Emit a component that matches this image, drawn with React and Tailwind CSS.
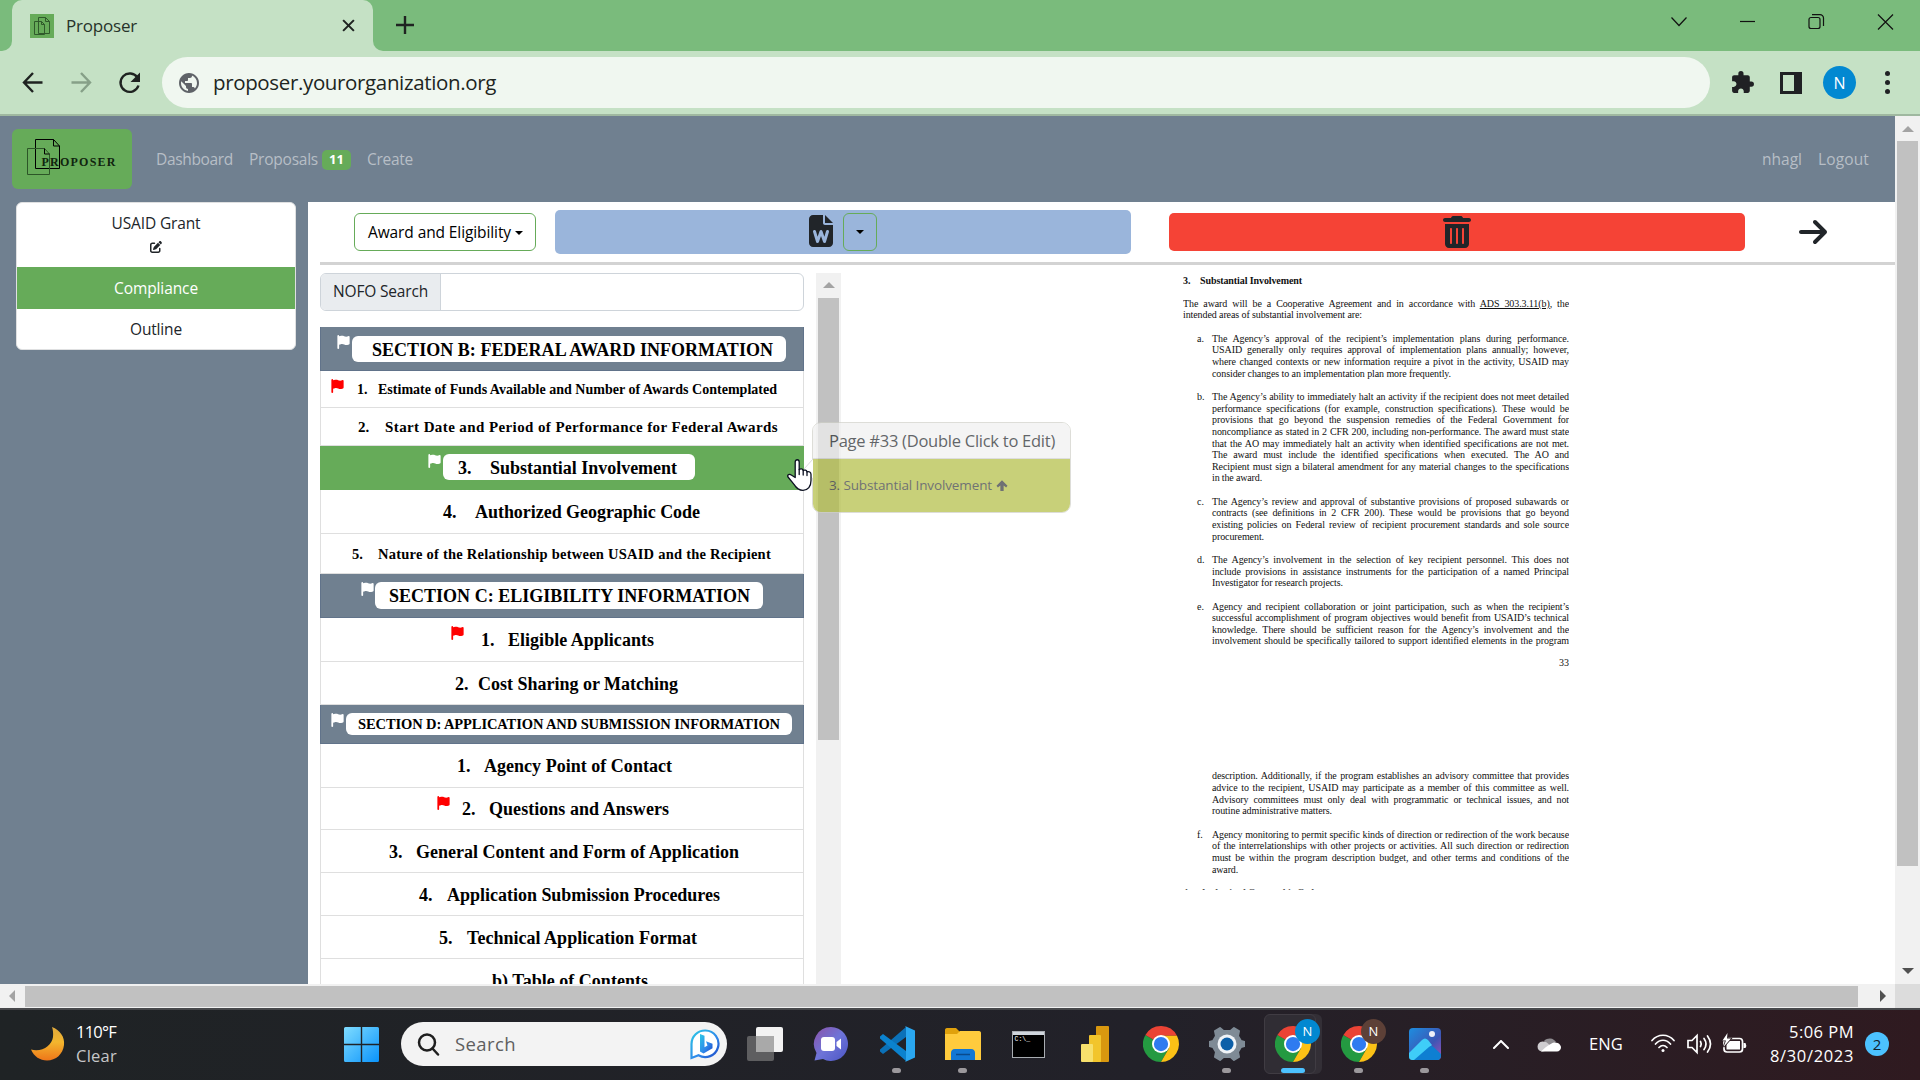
import React, { useLayoutEffect, useRef } from "react";
import { FaFlag, FaFileWord, FaTrashCan, FaArrowRight, FaPenToSquare } from "react-icons/fa6";
import { MdExtension } from "react-icons/md";

/* Single-line text whose tracking is computed so that it fills a given width. */
function Fit({ w, className = "", children }) {
  const ref = useRef(null);
  useLayoutEffect(() => {
    const el = ref.current;
    el.style.letterSpacing = "0px";
    const natural = el.getBoundingClientRect().width;
    el.style.letterSpacing = (w - natural) / el.textContent.length + "px";
  }, [w, children]);
  return (
    <span ref={ref} className={"inline-block shrink-0 whitespace-pre " + className}>
      {children}
    </span>
  );
}

function Globe() {
  return (
    <svg viewBox="0 0 24 24" className="h-[24px] w-[24px]" fill="#5f6368">
      <path d="M12 2C6.480 2 2 6.480 2 12s4.480 10 10 10 10-4.480 10-10S17.520 2 12 2z" />
      <path fill="#f0f7f0" d="M4 12c0-.6.080-1.210.210-1.780L9 15v1c0 1.100.900 2 2 2v1.930C7.060 19.430 4 16.070 4 12zM17.890 17.400c-.260-.810-1-1.400-1.900-1.400h-1v-3c0-.550-.450-1-1-1h-6v-2h2c.550 0 1-.450 1-1V7h2c1.100 0 2-.900 2-2v-.410C17.920 5.770 20 8.650 20 12c0 2.080-.810 3.980-2.110 5.400z" />
    </svg>
  );
}

function BrowserTabs() {
  return (
    <div className="flex h-[51px] bg-[#7abb7c]">
      <div className="flex w-[12px] items-end bg-[#c5e1c5]">
        <div className="h-full w-full rounded-br-[10px] bg-[#7abb7c]" />
      </div>
      <div className="bg-[#7abb7c]">
        <div className="flex h-[51px] w-[361px] items-center rounded-t-[10px] bg-[#c5e1c5] pl-[18px]">
          <svg viewBox="0 0 24 24" className="h-[24px] w-[24px] shrink-0 bg-[#66ab59]" fill="none" stroke="#2f5a2b" strokeWidth="1">
            <path d="M8.500 3.500h7l4 4v12h-11z" />
            <path d="M15.500 3.500v4h4M4.500 7.500h7l3 3v10h-10zM11.500 7.500v3h3" />
          </svg>
          <Fit w={71} className="ml-[12px] text-[17px] text-[#27332a]">Proposer</Fit>
          <svg viewBox="0 0 14 14" className="ml-[205px] h-[13px] w-[13px]" stroke="#1f2321" strokeWidth="2.200">
            <path d="M1.200 1.200l11.600 11.600M12.800 1.200L1.200 12.800" />
          </svg>
        </div>
      </div>
      <div className="flex w-[12px] bg-[#c5e1c5]">
        <div className="h-full w-full rounded-bl-[10px] bg-[#7abb7c]" />
      </div>
      <svg viewBox="0 0 18 18" className="mt-[16px] ml-[11px] h-[18px] w-[18px]" stroke="#1f2321" strokeWidth="2.400">
        <path d="M9 0v18M0 9h18" />
      </svg>
      <div className="ml-auto flex pt-[14px] pr-[22px]">
        <svg viewBox="0 0 240 16" className="h-[16px] w-[240px]" fill="none" stroke="#111" strokeWidth="1.200">
          <path d="M13.500 3.500l7.500 8 7.500-8" />
          <path d="M82 7.500h15" />
          <rect x="151" y="3.500" width="11" height="11" rx="2" />
          <path d="M154 .600h8a3.500 3.500 0 0 1 3.500 3.500v8" />
          <path d="M220 .500l15 15M235 .500l-15 15" />
        </svg>
      </div>
    </div>
  );
}

function AddressBar() {
  return (
    <div className="flex h-[65px] items-center border-b-2 border-[#9fb8a0] bg-[#c5e1c5] pb-0">
      <svg viewBox="0 0 142 24" className="ml-[20px] h-[24px] w-[142px]" fill="none" stroke="#1f2321" strokeWidth="2.400">
        <path d="M22.500 11.500H4.500M13 2L4 11.500l9 9.500" />
        <path stroke="#86a088" d="M51.500 11.500h18M61 2l9 9.500-9 9.500" />
        <path d="M117.500 6.700A9.200 9.200 0 1 0 118.500 14.500" />
        <path fill="#1f2321" stroke="none" d="M120 1.500v9.500h-9.500z" />
      </svg>
      <div className="flex h-[51px] w-[1548px] items-center rounded-full bg-[#f0f7f0] pl-[15px]">
        <Globe />
        <Fit w={283} className="ml-[12px] text-[20.500px] text-[#202521]">proposer.yourorganization.org</Fit>
      </div>
      <MdExtension className="ml-[20px] h-[25px] w-[25px] text-[#202124]" />
      <div className="ml-[25px] h-[22px] w-[22px] border-[3px] border-r-[8px] border-[#202124]" />
      <div className="ml-[21px] flex h-[33px] w-[33px] items-center justify-center rounded-full bg-[#0288d1] text-[16px] text-white">N</div>
      <div className="ml-[29px] flex flex-col gap-[4px]">
        <div className="h-[5px] w-[5px] rounded-full bg-[#202124]" />
        <div className="h-[5px] w-[5px] rounded-full bg-[#202124]" />
        <div className="h-[5px] w-[5px] rounded-full bg-[#202124]" />
      </div>
    </div>
  );
}

function Navbar() {
  return (
    <div className="flex h-[86px] items-start pl-[12px] text-[15.500px] text-[#b7bec6]">
      <div className="mt-[13px] flex h-[60px] w-[120px] rounded-[6px] bg-[#66ab59]">
        <svg viewBox="0 0 120 60" className="h-[60px] w-[120px]">
          <g fill="none" stroke="#000" strokeWidth="1">
            <path d="M23.500 10.500h18l6 6.500v22.500h-24z" />
            <path d="M41.500 10.500v6.500h6" />
            <path stroke="#2c5527" d="M15.500 19.500h17l5 5.500v20.500h-22z" />
            <path d="M32.500 19.500v5.500h5" />
          </g>
          <text x="29.500" y="37" fontFamily="Liberation Serif, serif" fontWeight="bold" fontSize="12" textLength="74" fill="#10240e">PROPOSER</text>
        </svg>
      </div>
      <div className="flex h-[86px] grow items-center pt-[2px] pl-[24px]">
        <Fit w={77}>Dashboard</Fit>
        <Fit w={69} className="ml-[16px]">Proposals</Fit>
        <span className="ml-[4px] flex h-[20px] w-[29px] items-center justify-center rounded-[5px] bg-[#66ab59] text-[13px] font-bold text-white">11</span>
        <Fit w={46} className="ml-[16px]">Create</Fit>
        <Fit w={40} className="ml-auto">nhagl</Fit>
        <Fit w={51} className="mr-[26px] ml-[16px]">Logout</Fit>
      </div>
    </div>
  );
}

function Sidebar() {
  return (
    <div className="mx-[16px] mr-[12px] flex h-[148px] w-[280px] shrink-0 flex-col overflow-hidden rounded-[6px] border border-[#dfe0e1] bg-white text-[15.500px] text-[#212529]">
      <div className="flex h-[64px] flex-col items-center pt-[8px]">
        <Fit w={89} className="leading-[24px]">USAID Grant</Fit>
        <FaPenToSquare className="mt-[6px] h-[12px] w-[12px]" />
      </div>
      <div className="flex h-[42px] items-center justify-center bg-[#66ab59] pt-[2px] text-white">
        <Fit w={84}>Compliance</Fit>
      </div>
      <div className="flex h-[40px] items-center justify-center pt-[2px]">
        <Fit w={52}>Outline</Fit>
      </div>
    </div>
  );
}

function Caret() {
  return <span className="h-0 w-0 border-x-[4px] border-t-[4px] border-x-transparent border-t-black" />;
}

function Toolbar() {
  return (
    <div className="flex h-[64px] items-start border-b-[3px] border-[#d3d3d3] text-[#212529]">
      <div className="mt-[11px] ml-[34px] flex h-[38px] w-[182px] items-center rounded-[6px] border border-[#66ab59] pt-[1px] pl-[13px] text-[15.500px] text-black">
        <Fit w={143}>Award and Eligibility</Fit>
        <span className="ml-[4px] flex"><Caret /></span>
      </div>
      <div className="mt-[8px] ml-[19px] flex h-[44px] w-[576px] items-center justify-center gap-[10px] rounded-[5px] bg-[#9ab5db]">
        <FaFileWord className="-mt-[3px] h-[32px] w-[24px]" />
        <div className="flex h-[38px] w-[34px] items-center justify-center rounded-[6px] border border-[#66ab59]">
          <Caret />
        </div>
      </div>
      <div className="mt-[11px] ml-[38px] flex h-[38px] w-[576px] items-center justify-center rounded-[5px] bg-[#f54336]">
        <FaTrashCan className="h-[32px] w-[28px]" />
      </div>
      <FaArrowRight className="mt-[14px] ml-[52px] h-[32px] w-[32px]" />
    </div>
  );
}

const rows = [
  { h: "h-[44px]", kind: "section", flag: "ml-[16px] mr-[2px]", pill: "w-[434px] h-[26px] mt-[2px] pl-[20px] pt-[2px]", size: "text-[18px]", t: "SECTION B: FEDERAL AWARD INFORMATION", tw: 401 },
  { h: "h-[37px]", flag: "ml-[10px] mr-[13px]", size: "text-[14px]", n: "1.", t: "Estimate of Funds Available and Number of Awards Contemplated", nb: "w-[21px]", tw: 399 },
  { h: "h-[38px]", pad: "pl-[37px]", size: "text-[15px]", n: "2.", t: "Start Date and Period of Performance for Federal Awards", nb: "w-[27px]", tw: 393 },
  { h: "h-[44px]", kind: "active", flag: "ml-[107px] mr-[2px]", pill: "w-[252px] h-[26px] pl-[15px] pt-[2px]", size: "text-[18px]", n: "3.", t: "Substantial Involvement", nb: "w-[32px]", tw: 187 },
  { h: "h-[44px]", pad: "pl-[122px]", size: "text-[18px]", n: "4.", t: "Authorized Geographic Code", nb: "w-[32px]", tw: 225 },
  { h: "h-[40px]", pad: "pl-[31px]", size: "text-[14.500px]", n: "5.", t: "Nature of the Relationship between USAID and the Recipient", nb: "w-[26px]", tw: 393 },
  { h: "h-[44px]", kind: "section", flag: "ml-[40px] mr-[1px]", pill: "w-[388px] h-[27px] pl-[14px] pt-[2px]", size: "text-[18px]", t: "SECTION C: ELIGIBILITY INFORMATION", tw: 361 },
  { h: "h-[44px]", flag: "ml-[130px] mr-[17px]", size: "text-[18px]", n: "1.", t: "Eligible Applicants", nb: "w-[27px]", tw: 146 },
  { h: "h-[43px]", pad: "pl-[134px]", size: "text-[18px]", n: "2.", t: "Cost Sharing or Matching", nb: "w-[23px]", tw: 200 },
  { h: "h-[39px]", kind: "section", flag: "ml-[10px] mr-[2px]", pill: "w-[446px] h-[22px] pl-[12px] pt-[1px]", size: "text-[14.500px]", t: "SECTION D: APPLICATION AND SUBMISSION INFORMATION", tw: 422 },
  { h: "h-[44px]", pad: "pl-[136px]", size: "text-[18px]", n: "1.", t: "Agency Point of Contact", nb: "w-[27px]", tw: 188 },
  { h: "h-[42px]", flag: "ml-[116px] mr-[12px]", size: "text-[18px]", n: "2.", t: "Questions and Answers", nb: "w-[27px]", tw: 180 },
  { h: "h-[43px]", pad: "pl-[68px]", size: "text-[18px]", n: "3.", t: "General Content and Form of Application", nb: "w-[27px]", tw: 323 },
  { h: "h-[43px]", pad: "pl-[98px]", size: "text-[18px]", n: "4.", t: "Application Submission Procedures", nb: "w-[28px]", tw: 273 },
  { h: "h-[43px]", pad: "pl-[118px]", size: "text-[18px]", n: "5.", t: "Technical Application Format", nb: "w-[28px]", tw: 230 },
  { h: "h-[43px]", pad: "pl-[171px]", size: "text-[18px]", t: "b) Table of Contents", tw: 156 },
];

const tone = {
  section: "bg-[#708090] border-[#61738a]",
  active: "bg-[#66ab59] border-[#66ab59]",
  plain: "bg-white border-[#dfdfdf]",
};

function Row({ r }) {
  const kind = r.kind || "plain";
  return (
    <div className={"flex shrink-0 items-center border-x border-b font-['Liberation_Serif',serif] font-bold text-black " + r.h + " " + r.size + " " + (r.pad || "") + " " + tone[kind]}>
      {r.flag && (
        <FaFlag className={"mt-[8px] h-[14px] w-[13px] shrink-0 self-start " + r.flag + " " + (r.kind ? "text-white" : "text-[#f00]")} />
      )}
      <div className={"flex items-center leading-none " + (r.pill ? "shrink-0 rounded-[6px] bg-white " + r.pill : "pt-[2px]")}>
        {r.n && <span className={"shrink-0 " + r.nb}>{r.n}</span>}
        <Fit w={r.tw}>{r.t}</Fit>
      </div>
    </div>
  );
}

function Outline() {
  return (
    <div className="flex w-[496px] shrink-0 flex-col overflow-hidden pt-[8px] pr-[12px]">
      <div className="flex h-[38px] shrink-0 overflow-hidden rounded-[6px] border border-[#ced4da] text-[15.500px] text-[#212529]">
        <div className="flex w-[120px] items-center border-r border-[#ced4da] bg-[#e9ecef] pt-[1px] pl-[12px]">
          <Fit w={95}>NOFO Search</Fit>
        </div>
      </div>
      <div className="mt-[16px] flex flex-col">
        {rows.map((r) => <Row key={r.t} r={r} />)}
      </div>
    </div>
  );
}

/*
 * Page text, one entry per printed line: [kind, text, width].
 * Kinds: j/i fill the measure, l/e end a paragraph at the given width, "a." starts a list item.
 */
const doc = [
  ["j", "The award will be a Cooperative Agreement and in accordance with |ADS 303.3.11(b)|, the"],
  ["l", "intended areas of substantial involvement are:", 179],
  ["", ""],
  ["a.", "The Agency’s approval of the recipient’s implementation plans during performance."],
  ["i", "USAID generally only requires approval of implementation plans annually; however,"],
  ["i", "where changed contexts or new information require a pivot in the activity, USAID may"],
  ["e", "consider changes to an implementation plan more frequently.", 239],
  ["", ""],
  ["b.", "The Agency’s ability to immediately halt an activity if the recipient does not meet detailed"],
  ["i", "performance specifications (for example, construction specifications). These would be"],
  ["i", "provisions that go beyond the suspension remedies of the Federal Government for"],
  ["i", "noncompliance as stated in 2 CFR 200, including non-performance. The award must state"],
  ["i", "that the AO may immediately halt an activity when identified specifications are not met."],
  ["i", "The award must include the identified specifications when executed. The AO and"],
  ["i", "Recipient must sign a bilateral amendment for any material changes to the specifications"],
  ["e", "in the award.", 50],
  ["", ""],
  ["c.", "The Agency’s review and approval of substantive provisions of proposed subawards or"],
  ["i", "contracts (see definitions in 2 CFR 200). These would be provisions that go beyond"],
  ["i", "existing policies on Federal review of recipient procurement standards and sole source"],
  ["e", "procurement.", 52],
  ["", ""],
  ["d.", "The Agency’s involvement in the selection of key recipient personnel. This does not"],
  ["i", "include provisions in assistance instruments for the participation of a named Principal"],
  ["e", "Investigator for research projects.", 131],
  ["", ""],
  ["e.", "Agency and recipient collaboration or joint participation, such as when the recipient’s"],
  ["i", "successful accomplishment of program objectives would benefit from USAID’s technical"],
  ["i", "knowledge. There should be sufficient reason for the Agency’s involvement and the"],
  ["i", "involvement should be specifically tailored to support identified elements in the program"],
];

const docNext = [
  ["i", "description. Additionally, if the program establishes an advisory committee that provides"],
  ["i", "advice to the recipient, USAID may participate as a member of this committee as well."],
  ["i", "Advisory committees must only deal with programmatic or technical issues, and not"],
  ["e", "routine administrative matters.", 120],
  ["", ""],
  ["f.", "Agency monitoring to permit specific kinds of direction or redirection of the work because"],
  ["i", "of the interrelationships with other projects or activities. All such direction or redirection"],
  ["i", "must be within the program description budget, and other terms and conditions of the"],
  ["e", "award.", 26],
];

function DocLine({ l }) {
  const [k, text, w] = l;
  const marker = k.endsWith(".") ? k : "";
  const indent = k !== "j" && k !== "l";
  const parts = text.split("|");
  return (
    <div className="flex h-[11.650px] whitespace-nowrap">
      {indent && <span className="w-[29px] shrink-0 pl-[14px]">{marker}</span>}
      {w ? (
        <Fit w={w}>{text}</Fit>
      ) : (
        <span className="w-0 grow tracking-[-0.1px] [text-align-last:justify]">
          {parts[0]}
          {parts[1] && <u>{parts[1]}</u>}
          {parts[2]}
        </span>
      )}
    </div>
  );
}

function Document() {
  return (
    <div className="mt-[10px] ml-[342px] h-[615px] w-[386px] shrink-0 overflow-hidden font-['Liberation_Serif',serif] text-[10px] leading-[11.650px] text-[#111]">
      <div className="flex h-[23.300px] font-bold">
        <span className="w-[17px]">3.</span>
        <Fit w={102}>Substantial Involvement</Fit>
      </div>
      {doc.map((l, i) => <DocLine key={i} l={l} />)}
      <div className="mt-[9.500px] h-[11.650px] text-right">33</div>
      <div className="mt-[102.200px]">
        {docNext.map((l, i) => <DocLine key={i} l={l} />)}
      </div>
      <div className="mt-[11.650px] flex h-[11.650px] font-bold text-[#555]">
        <span className="w-[17px]">4.</span>
        <Fit w={118}>Authorized Geographic Code</Fit>
      </div>
    </div>
  );
}

function Popover() {
  return (
    <div className="absolute top-[158px] left-[-4px] h-[91px] w-[259px] opacity-70">
      <svg viewBox="0 0 10 20" className="absolute top-[37px] left-[-9px] h-[20px] w-[10px]" fill="#fff" stroke="#ccc">
        <path d="M10 0L1 10l9 10" />
      </svg>
      <div className="flex h-[91px] flex-col overflow-hidden rounded-[9px] border border-[#cfd0c8] text-[#212529]">
        <div className="flex h-[36px] shrink-0 items-center border-b border-[#d0d0d0] bg-[#f0f0f0] pt-[2px] pl-[16px] text-[16.500px]">
          <Fit w={226}>Page #33 (Double Click to Edit)</Fit>
        </div>
        <div className="flex grow items-center bg-[#b2bd41] pt-[1px] pl-[16px] text-[13.500px] text-[#33363a]">
          <Fit w={163}>3. Substantial Involvement</Fit>
          <svg viewBox="0 0 12 12" className="ml-[4px] h-[11px] w-[12px]" fill="currentColor">
            <path d="M6 .300L12 6.300l-1.500 2L7.800 6v6H4.200V6L1.500 8.300 0 6.300z" />
          </svg>
        </div>
      </div>
    </div>
  );
}

function HandCursor() {
  return (
    <svg viewBox="0 0 25 32" className="absolute top-[195px] left-[-29px] h-[32px] w-[25px]" fill="#fff" stroke="#0b1020" strokeWidth="1.300" strokeLinejoin="round" strokeLinecap="round">
      <path d="M8.200 18.500V3c0-3 4-3 4 0v7.500c1.500-1.300 3.700-.700 4 1 1.500-.900 3.500-.300 3.800 1.300 2-.700 4 .400 4 2.700v6c0 6-3 9.800-8 9.800-4.500 0-6.500-2-9-6L1 18c-1.200-2.200 1.600-3.500 3.300-2z" />
      <path fill="none" d="M12.200 10.500v5M16.200 11.500v4.500M20 13v3.500" />
    </svg>
  );
}

function ListScrollbar() {
  return (
    <div className="relative mt-[8px] w-[25px] shrink-0 bg-[#f1f1f1] px-[2px]">
      <div className="flex h-[25px] items-center justify-center">
        <span className="border-x-[6px] border-b-[6px] border-x-transparent border-b-[#a3a3a3]" />
      </div>
      <div className="h-[442px] bg-[#c1c1c1]" />
      <div className="absolute top-[-9px] left-0">
        <Popover />
        <HandCursor />
      </div>
    </div>
  );
}

function Page() {
  return (
    <div className="flex h-[892px] bg-[#f1f1f1]">
      <div className="flex w-[1895px] flex-col">
        <div className="flex h-[868px] flex-col overflow-hidden bg-[#708090]">
          <Navbar />
          <div className="flex grow overflow-hidden">
            <Sidebar />
            <div className="flex h-[782px] grow flex-col bg-white pl-[12px]">
              <Toolbar />
              <div className="flex min-h-0 grow">
                <Outline />
                <ListScrollbar />
                <Document />
              </div>
            </div>
          </div>
        </div>
        <div className="flex h-[24px] items-center bg-[#f1f1f1]">
          <span className="ml-[9px] border-y-[6px] border-r-[6px] border-y-transparent border-r-[#a3a3a3]" />
          <div className="ml-[10px] h-[21px] w-[1833px] bg-[#c1c1c1]" />
          <span className="ml-[22px] border-y-[6px] border-l-[6px] border-y-transparent border-l-[#505050]" />
        </div>
      </div>
      <div className="flex w-[25px] flex-col items-center">
        <div className="flex h-[25px] items-center">
          <span className="border-x-[6px] border-b-[6px] border-x-transparent border-b-[#a3a3a3]" />
        </div>
        <div className="h-[725px] w-[21px] bg-[#c1c1c1]" />
        <span className="mt-[102px] border-x-[6px] border-t-[6px] border-x-transparent border-t-[#505050]" />
        <div className="mt-auto h-[24px] w-full bg-[#dcdcdc]" />
      </div>
    </div>
  );
}

function Chrome() {
  return (
    <svg viewBox="0 0 48 48" className="h-[36px] w-[36px]">
      <path fill="#249a41" d="M3.200 12A24 24 0 0 0 24 48l10.400-18z" />
      <path fill="#ea4335" d="M3.200 12L24 24V13h21.300a24 24 0 0 0-42.100-1z" />
      <path fill="#fbc116" d="M24 13h21.300A24 24 0 0 1 24 48l10.400-18z" />
      <circle cx="24" cy="24" r="12" fill="#fff" />
      <circle cx="24" cy="24" r="9.500" fill="#2f7bf0" />
    </svg>
  );
}

function TaskIcon({ name }) {
  switch (name) {
    case "taskview":
      return (
        <svg viewBox="0 0 36 36" className="h-[36px] w-[36px]">
          <rect x="9" y="1" width="27" height="25" rx="2" fill="#f2f2f2" />
          <rect x="0" y="10" width="27" height="25" rx="2" fill="#5e5e60" />
          <path fill="#a9a9a9" d="M9 10h18v16H9z" />
        </svg>
      );
    case "chat":
      return (
        <svg viewBox="0 0 36 36" className="h-[36px] w-[36px]">
          <defs><linearGradient id="chat" x1="0" y1="0" x2="1" y2="1"><stop offset="0" stopColor="#8c52a8" /><stop offset=".5" stopColor="#6e74d8" /><stop offset="1" stopColor="#4b55c4" /></linearGradient></defs>
          <path fill="url(#chat)" d="M18 1a17 17 0 1 1-8 32l-8.500 1.500L3.500 27A17 17 0 0 1 18 1z" />
          <rect x="8" y="11" width="14" height="14" rx="3" fill="#fff" />
          <path fill="#fff" d="M23.500 16l4.500-3.500v11L23.500 20z" />
        </svg>
      );
    case "vscode":
      return (
        <svg viewBox="0 0 36 36" className="h-[36px] w-[36px]">
          <path fill="#0b71b8" d="M27 1L1 23.500v2L4 28l23-17z" />
          <path fill="#0b82ce" d="M27 35L1 12.500v-2L4 8l23 17z" />
          <path fill="#2aa7f0" d="M26 0l10 4.500v27L26 36c1-1 1-2 1-3V3c0-1 0-2-1-3z" />
        </svg>
      );
    case "explorer":
      return (
        <svg viewBox="0 0 36 36" className="h-[36px] w-[36px]">
          <path fill="#e0a10c" d="M0 4c0-1 .500-2 2-2h9l4 4v6H0z" />
          <path fill="#ffcb3d" d="M0 8h12l3-3h19c1.500 0 2 1 2 2v27H0z" />
          <path fill="#1277d4" d="M6 34v-7c0-2 1-4 4-4h16c3 0 4 2 4 4v7z" />
          <path stroke="#0a4a8c" strokeWidth="1.500" d="M11 28.500h14" />
        </svg>
      );
    case "cmd":
      return (
        <div className="mr-[2px] flex h-[27px] w-[33px] flex-col border border-[#a9adb2] bg-black">
          <div className="h-[3px] bg-[#cfd5dc]" />
          <span className="pl-[2px] font-['Liberation_Mono',monospace] text-[6.500px] leading-[9px] text-white">C:\_</span>
        </div>
      );
    case "powerbi":
      return (
        <svg viewBox="0 0 28 36" className="h-[36px] w-[28px]">
          <rect x="15" y="0" width="13" height="36" rx="1" fill="#d9980f" />
          <rect x="8" y="9" width="12" height="27" rx="1" fill="#f2c52c" />
          <rect x="0" y="18" width="12" height="18" rx="1" fill="#f7e06c" />
        </svg>
      );
    case "settings":
      return (
        <svg viewBox="0 0 36 36" className="h-[36px] w-[36px]">
          <path fill="#7f8b96" stroke="#7f8b96" strokeWidth="2" strokeLinejoin="round" d="M11 2l3.500 3h7L25 2l5 3-1 5 3 5 3.500 1v4L32 21l-3 5 1 5-5 3-3.500-3h-7L11 34l-5-3 1-5-3-5-3.500-1v-4L4 15l3-5-1-5z" />
          <circle cx="18" cy="18" r="9.500" fill="#f0f4f8" />
          <circle cx="18" cy="18" r="6.500" fill="#0c5fa8" />
        </svg>
      );
    case "photos":
      return (
        <svg viewBox="0 0 32 32" className="h-[32px] w-[32px]">
          <defs><linearGradient id="ph" x1="0" y1="0" x2="1" y2="1"><stop offset="0" stopColor="#1d8ee0" /><stop offset=".6" stopColor="#3d56b4" /><stop offset="1" stopColor="#a04fb8" /></linearGradient></defs>
          <rect width="32" height="32" rx="4" fill="url(#ph)" />
          <path fill="#3fcdf8" d="M0 25l13-13c2-2 4-2 6 0l4 5L7 32H4c-3 0-4-1-4-4z" />
          <path fill="#0e7fd2" d="M5 32l15-13c1.500-1.300 3-1.300 4.500 0l7.500 7c0 4-1 6-4 6z" />
          <circle cx="23" cy="6" r="3" fill="#f0f0f8" />
        </svg>
      );
    default:
      return <Chrome />;
  }
}

const apps = [
  { id: "taskview" },
  { id: "chat" },
  { id: "vscode", dot: true },
  { id: "explorer", dot: true },
  { id: "cmd" },
  { id: "powerbi" },
  { id: "chrome" },
  { id: "settings", dot: true },
  { id: "chrome-a", active: true, badge: "bg-[#0288d1]" },
  { id: "chrome-b", dot: true, badge: "bg-[#5d4037]" },
  { id: "photos", dot: true },
];

function Taskbar() {
  return (
    <div className="flex h-[72px] items-center border-t-2 border-[#47484b] bg-linear-to-r from-[#1f2325] via-[#222129] via-60% to-[#2f1a20] pb-[2px] pl-[31px] text-white">
      <svg viewBox="0 0 34 34" className="h-[34px] w-[34px]">
        <defs><linearGradient id="moon" x1="0" y1="0" x2="0" y2="1"><stop offset="0" stopColor="#e0a93c" /><stop offset=".45" stopColor="#f3b62e" /><stop offset="1" stopColor="#ee7619" /></linearGradient></defs>
        <path fill="url(#moon)" d="M21 0c8 3 13 10 12 18-1 9-8 15.500-17 15.500-7 0-13-4-16-11 11 3 21-4 22-12.500.400-4 0-7-1-10z" />
      </svg>
      <div className="ml-[11px] flex w-[268px] flex-col text-[16.500px] leading-[24px]">
        <Fit w={40} className="self-start">110°F</Fit>
        <Fit w={41} className="self-start text-[#c6c7c8]">Clear</Fit>
      </div>
      <svg viewBox="0 0 35 35" className="h-[35px] w-[35px]">
        <defs><linearGradient id="win" x1="0" y1="0" x2="1" y2="1"><stop offset="0" stopColor="#7fdcff" /><stop offset="1" stopColor="#0a93fb" /></linearGradient></defs>
        <path fill="url(#win)" d="M1.500 0h15.300v16.800H0V1.500Q0 0 1.500 0zM18.200 0h15.300Q35 0 35 1.500v15.300H18.200zM0 18.200h16.800V35H1.500Q0 35 0 33.500zM18.200 18.200H35v15.300q0 1.500-1.500 1.500H18.200z" />
      </svg>
      <div className="ml-[22px] flex h-[44px] w-[326px] items-center rounded-full bg-[#f3f3f3] pl-[16px]">
        <svg viewBox="0 0 23 23" className="h-[23px] w-[23px]" fill="none" stroke="#1f1f1f" strokeWidth="2.500" strokeLinecap="round">
          <circle cx="10" cy="9.500" r="8" /><path d="M15.500 15.500l5.500 6" />
        </svg>
        <Fit w={61} className="ml-[15px] text-[18.500px] text-[#5f5f5f]">Search</Fit>
        <svg viewBox="0 0 30 31" className="ml-auto mr-[7px] h-[31px] w-[30px]">
          <defs><linearGradient id="bing" x1="0" y1="0" x2="1" y2="1"><stop offset="0" stopColor="#2cc8e6" /><stop offset=".6" stopColor="#2f86ea" /><stop offset="1" stopColor="#1c46c4" /></linearGradient></defs>
          <path fill="#fff" stroke="url(#bing)" strokeWidth="2.200" d="M15.500 1.500a13.300 13.300 0 1 1-7 24.800L1.500 29V15A13.500 13.500 0 0 1 15.500 1.500z" />
          <path fill="url(#bing)" d="M10 5l4.500 1.700v11.500l3-1.700-1.500-4.300 6.500 2.500v4.500L13.500 24.500 10 22.500z" />
        </svg>
      </div>
      <div className="ml-[5px] flex">
        {apps.map((a) => (
          <div key={a.id} className="relative flex h-[72px] w-[66px] items-center justify-center">
            {a.active && <div className="absolute top-[6px] left-[4px] h-[60px] w-[52px] rounded-[6px] border border-[#403c43] bg-[#302d34] shadow-[6px_0_0_0_#332f36]" />}
            <div className="relative"><TaskIcon name={a.id} /></div>
            {a.badge && <div className={"absolute top-[11px] right-[6px] flex h-[25px] w-[25px] items-center justify-center rounded-full text-[13px] " + a.badge}>N</div>}
            {a.dot && <div className="absolute bottom-[7px] left-[28px] h-[5px] w-[9px] rounded-full bg-[#9b989c]" />}
            {a.active && <div className="absolute bottom-[7px] left-[21px] h-[5px] w-[24px] rounded-full bg-[#4cc2ff]" />}
          </div>
        ))}
      </div>
      <svg viewBox="0 0 16 9" className="ml-[35px] h-[9px] w-[16px]" fill="none" stroke="#fff" strokeWidth="2" strokeLinecap="round"><path d="M1 8l7-7 7 7" /></svg>
      <svg viewBox="0 0 24 16" className="ml-[28px] h-[16px] w-[24px]">
        <path fill="#8f8c90" d="M7 5a7 6 0 0 1 12 1l-8 5z" />
        <path fill="#cfcdd0" d="M5 15.500C-1 15-1 6 5.500 5.500c3 0 5 1 7 3.500L8 15z" />
        <path fill="#fff" d="M4 15.500c3-3 9-8 13-9 5-.500 7 3 7 5s-2 4-4 4z" />
      </svg>
      <Fit w={34} className="ml-[28px] text-[16.500px]">ENG</Fit>
      <svg viewBox="0 0 96 22" className="ml-[28px] h-[22px] w-[96px]" fill="none" stroke="#fff" strokeWidth="1.700" strokeLinecap="round">
        <path d="M1 7.500C7 .500 17 .500 23 7.500M4.500 11c4.500-5 10.500-5 15 0M8 14.500c2.500-2.700 5.500-2.700 8 0" />
        <circle cx="12" cy="17.500" r="1.500" fill="#fff" stroke="none" />
        <path d="M37 7.500h4l5-5v17l-5-5h-4zM49.500 8.500q1.500 2.500 0 5M53 5.500q4 5.500 0 11M56.500 3q6 8 0 16" />
        <rect x="73" y="5.500" width="18.500" height="13.500" rx="3" />
        <path fill="#fff" stroke="none" d="M75.500 8h13.500v8.500H75.500zM92.500 10h2q1.500 2.500 0 5h-2z" />
        <path fill="#fff" stroke="#2b1d23" strokeWidth="1.600" paintOrder="stroke" d="M76.500 0l-5 7.500h3.500L72.500 14l7.500-8.500h-4z" />
      </svg>
      <div className="ml-[23px] flex w-[84px] flex-col items-end text-[16.500px] leading-[24px]">
        <Fit w={65}>5:06 PM</Fit>
        <Fit w={84}>8/30/2023</Fit>
      </div>
      <div className="ml-[11px] flex h-[24px] w-[24px] items-center justify-center rounded-full bg-[#4cc2ff] text-[15px] text-[#12202a]">2</div>
    </div>
  );
}

export default function App() {
  return (
    <div className="h-[1080px] w-[1920px] overflow-hidden font-['Open_Sans','Noto_Sans',sans-serif]">
      <BrowserTabs />
      <AddressBar />
      <Page />
      <Taskbar />
    </div>
  );
}
